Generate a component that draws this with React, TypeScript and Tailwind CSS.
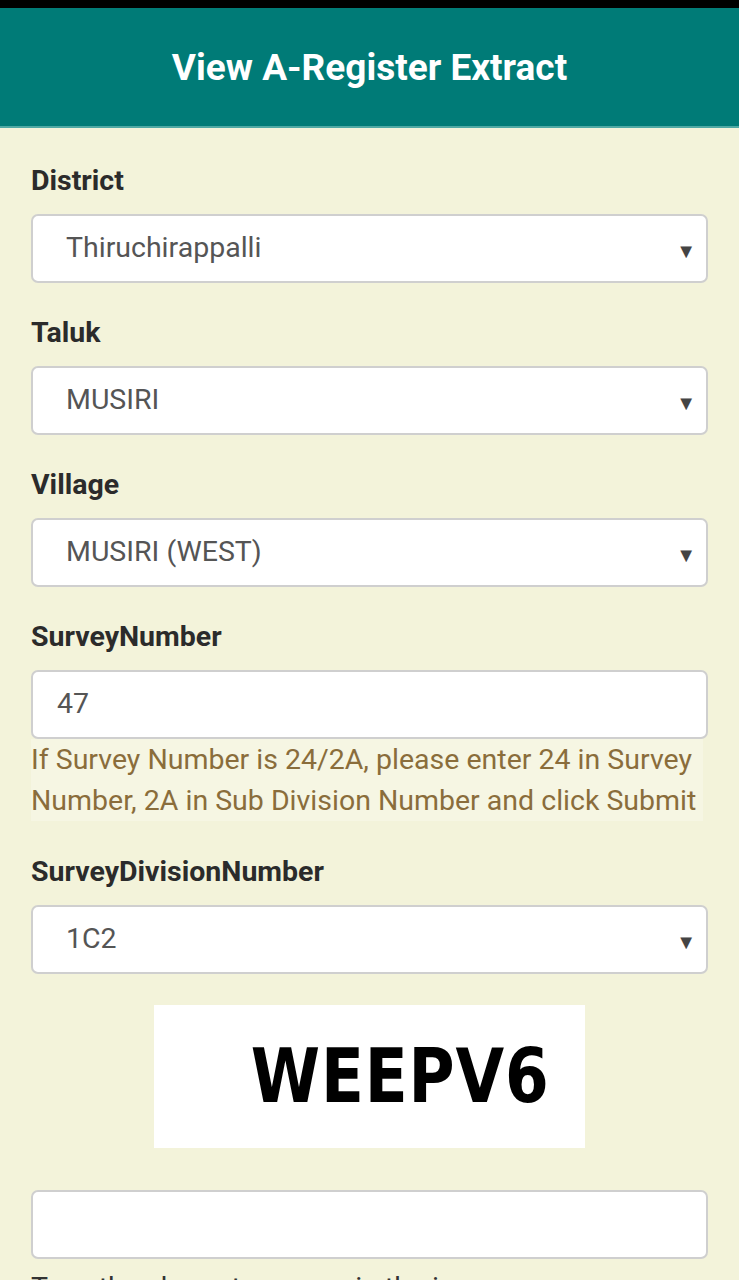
import React from 'react';

const font = { fontFamily: 'Roboto, "Noto Sans", sans-serif' };

function Field({ label, value, select = true }: { label: string; value: string; select?: boolean }) {
  return (
    <div className="mb-[32px]">
      <div className="h-[37px] flex items-center text-[28.5px] font-bold text-[#2b2b2b] mb-[14px]">{label}</div>
      <div className="relative h-[69px] bg-white border-2 border-[#cfcfcf] rounded-[7px] flex items-center">
        <span className={`${select ? 'pl-[33px]' : 'pl-[24px]'} text-[28.5px] text-[#555]`}>{value}</span>
        {select ? <span className="absolute right-[10px] top-[20px] text-[20px] text-[#444]">▼</span> : null}
      </div>
    </div>
  );
}

export default function App() {
  return (
    <div className="w-[739px] h-[1280px] overflow-hidden bg-[#f3f3da]" style={font}>
      <div className="h-[8px] bg-black" />
      <div className="h-[120px] bg-[#007b77] flex items-center justify-center border-b-2 border-[#4fa9a4]">
        <h1 className="text-white text-[37px] font-bold pt-[2px]">View A-Register Extract</h1>
      </div>
      <div className="px-[31px] pt-[35px]">
        <Field label="District" value="Thiruchirappalli" />
        <Field label="Taluk" value="MUSIRI" />
        <Field label="Village" value="MUSIRI (WEST)" />
        <div>
          <div className="h-[37px] flex items-center text-[28.5px] font-bold text-[#2b2b2b] mb-[14px]">SurveyNumber</div>
          <div className="h-[69px] bg-white border-2 border-[#cfcfcf] rounded-[7px] flex items-center">
            <span className="pl-[24px] text-[28.5px] text-[#555]">47</span>
          </div>
          <p className="w-[672px] bg-[#f6f6e3] text-[#8a6d3b] text-[28.5px] leading-[41px] mb-[33px]">
            If Survey Number is 24/2A, please enter 24 in Survey Number, 2A in Sub Division Number and click Submit
          </p>
        </div>
        <div className="mb-[31px]">
          <div className="h-[37px] flex items-center text-[28.5px] font-bold text-[#2b2b2b] mb-[14px]">SurveyDivisionNumber</div>
          <div className="relative h-[69px] bg-white border-2 border-[#cfcfcf] rounded-[7px] flex items-center">
            <span className="pl-[33px] text-[28.5px] text-[#555]">1C2</span>
            <span className="absolute right-[10px] top-[20px] text-[20px] text-[#444]">▼</span>
          </div>
        </div>
        <div className="flex justify-center">
          <div className="w-[431px] h-[143px] bg-white flex items-center justify-end pr-[35px]">
            <span
              className="text-[74px] font-bold text-black scale-x-[0.85] origin-right tracking-[1px]"
              style={{ fontFamily: '"DejaVu Sans", Verdana, sans-serif' }}
            >
              WEEPV6
            </span>
          </div>
        </div>
        <div className="mt-[42px] h-[69px] bg-white border-2 border-[#cfcfcf] rounded-[7px]" />
        <p className="mt-[8px] text-[28.5px] text-[#333]">Type the characters seen in the image</p>
      </div>
    </div>
  );
}
